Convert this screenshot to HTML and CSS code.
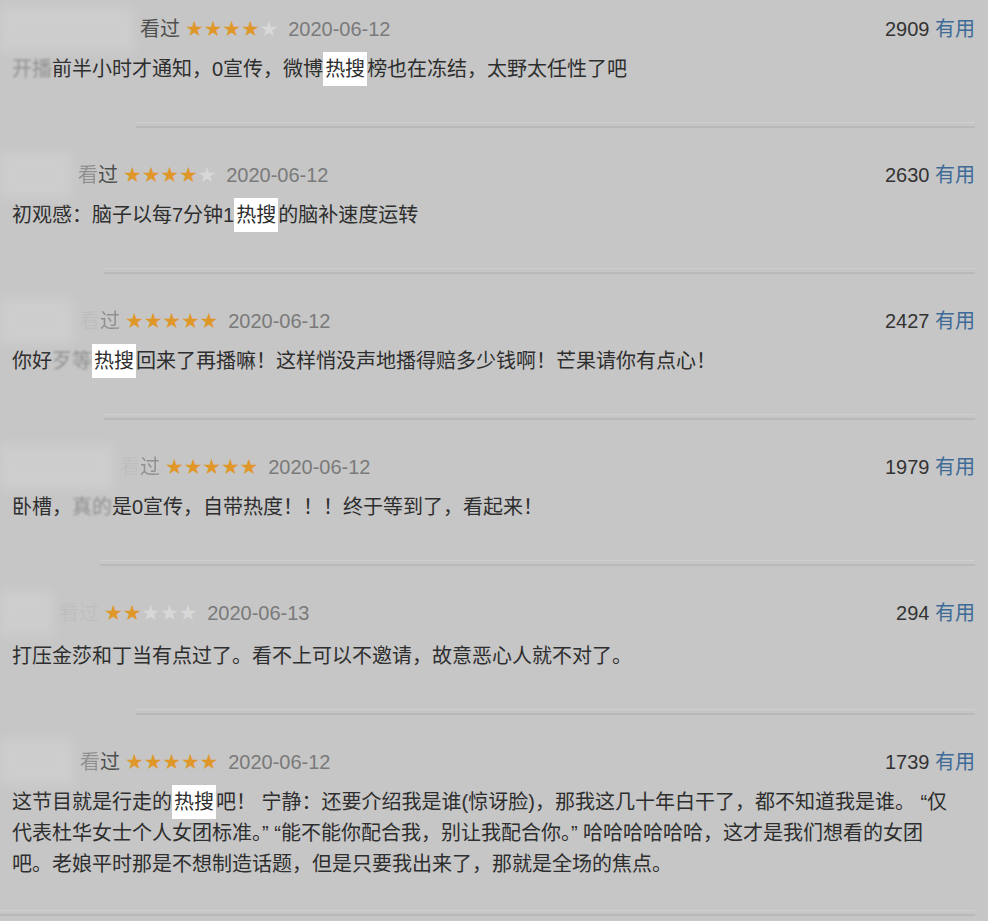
FILE: index.html
```html
<!DOCTYPE html>
<html lang="zh-CN">
<head>
  <meta charset="UTF-8" />
  <meta name="viewport" content="width=device-width, initial-scale=1" />
  <title>短评</title>
  <link rel="stylesheet" href="styles.css">
</head>
<body>
  <div id="comments">

    <div class="item first">
      <div class="head">
        <span class="who w1"></span>
        <span class="verb">看过</span>
        <span class="stars"><b>★★★★</b>★</span>
        <span class="date">2020-06-12</span>
        <span class="vote">2909 <a href="#">有用</a></span>
      </div>
      <p class="text"><span class="fade">开播</span>前半小时才通知，0宣传，微博<span class="hot">热搜</span>榜也在冻结，太野太任性了吧</p>
    </div>
    <hr class="sep s136">

    <div class="item">
      <div class="head">
        <span class="who w2"></span>
        <span class="verb"><i class="half">看</i>过</span>
        <span class="stars"><b>★★★★</b>★</span>
        <span class="date">2020-06-12</span>
        <span class="vote">2630 <a href="#">有用</a></span>
      </div>
      <p class="text">初观感：脑子以每7分钟1<span class="hot">热搜</span>的脑补速度运转</p>
    </div>
    <hr class="sep s104">

    <div class="item">
      <div class="head">
        <span class="who w3"></span>
        <span class="verb"><i class="gone">看</i><i class="half">过</i></span>
        <span class="stars"><b>★★★★★</b></span>
        <span class="date">2020-06-12</span>
        <span class="vote">2427 <a href="#">有用</a></span>
      </div>
      <p class="text">你好<span class="fade">歹等</span><span class="hot">热搜</span>回来了再播嘛！这样悄没声地播得赔多少钱啊！芒果请你有点心！</p>
    </div>
    <hr class="sep s104">

    <div class="item">
      <div class="head">
        <span class="who w4"></span>
        <span class="verb"><i class="gone">看</i><i class="half">过</i></span>
        <span class="stars"><b>★★★★★</b></span>
        <span class="date">2020-06-12</span>
        <span class="vote">1979 <a href="#">有用</a></span>
      </div>
      <p class="text">卧槽，<span class="fade">真的</span>是0宣传，自带热度！！！终于等到了，看起来！</p>
    </div>
    <hr class="sep s100">

    <div class="item">
      <div class="head">
        <span class="who w5"></span>
        <span class="verb"><i class="gone">看过</i></span>
        <span class="stars"><b>★★</b>★★★</span>
        <span class="date">2020-06-13</span>
        <span class="vote">294 <a href="#">有用</a></span>
      </div>
      <p class="text low">打压金莎和丁当有点过了。看不上可以不邀请，故意恶心人就不对了。</p>
    </div>
    <hr class="sep s136">

    <div class="item last">
      <div class="head">
        <span class="who w6"></span>
        <span class="verb"><i class="half">看</i>过</span>
        <span class="stars"><b>★★★★★</b></span>
        <span class="date">2020-06-12</span>
        <span class="vote">1739 <a href="#">有用</a></span>
      </div>
      <p class="text">这节目就是行走的<span class="hot">热搜</span>吧！ 宁静：还要介绍我是谁(惊讶脸)，那我这几十年白干了，都不知道我是谁。 “仅<br>代表杜华女士个人女团标准。” “能不能你配合我，别让我配合你。” 哈哈哈哈哈哈，这才是我们想看的女团<br>吧。老娘平时那是不想制造话题，但是只要我出来了，那就是全场的焦点。</p>
    </div>
    <hr class="sep s0">

  </div>
</body>
</html>
```

FILE: styles.css
```css
body {
  margin: 0;
  background-color: #c6c6c6;
  font-family: "Liberation Sans", "Noto Sans CJK SC", sans-serif;
  color: #2e2e2e;
  overflow: hidden;
}
#comments {
  width: 975px;
}
.item {
  padding: 35px 0 37px 12px;
}
.item.first {
  padding-top: 17px;
}
.item.last {
  padding-bottom: 30px;
}
.head {
  display: flex;
  align-items: center;
  height: 24px;
  font-size: 20px;
  line-height: 24px;
}
.who {
  display: block;
  margin-left: -12px;
  height: 46px;
  background-color: #cdcdcd;
  filter: blur(6px);
}
.w1 { width: 134px; }
.w2 { width: 72px; }
.w3 { width: 74px; }
.w4 { width: 114px; }
.w5 { width: 53px; }
.w6 { width: 74px; }
.verb {
  margin-left: 6px;
  color: #4f4f4f;
}
.verb i {
  font-style: normal;
}
.verb .half {
  opacity: 0.45;
}
.verb .gone {
  opacity: 0.06;
}
.stars {
  margin-left: 5px;
  font-family: "DejaVu Sans", sans-serif;
  font-size: 21px;
  letter-spacing: -0.2px;
  color: #d8d8d8;
}
.stars b {
  font-weight: normal;
  color: #e0972a;
}
.date {
  margin-left: 10px;
  color: #7a7a7a;
}
.vote {
  margin-left: auto;
  color: #333;
}
.vote a {
  color: #3e6b97;
  text-decoration: none;
}
.text {
  margin: 13px 0 0 0;
  font-size: 20px;
  line-height: 31px;
  white-space: nowrap;
}
.text.low {
  margin-top: 16px;
}
.hot {
  background-color: #fff;
  padding: 6px 2px;
}
.fade {
  opacity: 0.35;
  filter: blur(1px);
}
.sep {
  margin: 0;
  height: 0;
  border: none;
  border-top: 1px solid #cfcfcf;
  border-bottom: 2px solid #b9b9b9;
  padding-top: 3px;
}
.s136 { margin-left: 136px; }
.s104 { margin-left: 104px; }
.s100 { margin-left: 100px; }
.s0 { margin-left: 0; }
```
